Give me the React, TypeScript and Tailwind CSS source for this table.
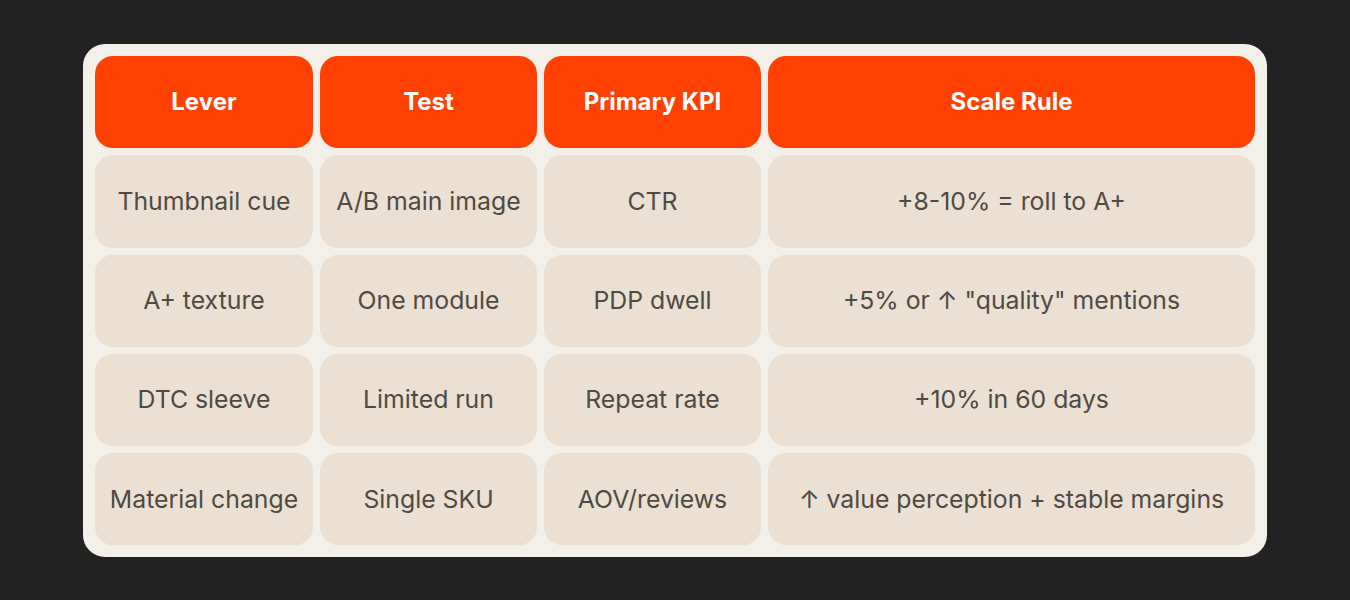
import React from 'react';

const headers = ['Lever', 'Test', 'Primary KPI', 'Scale Rule'];

const rows: string[][] = [
  ['Thumbnail cue', 'A/B main image', 'CTR', '+8-10% = roll to A+'],
  ['A+ texture', 'One module', 'PDP dwell', '+5% or ↑ "quality" mentions'],
  ['DTC sleeve', 'Limited run', 'Repeat rate', '+10% in 60 days'],
  ['Material change', 'Single SKU', 'AOV/reviews', '↑ value perception + stable margins'],
];

export default function App() {
  return (
    <div className="w-[1350px] h-[600px] bg-[#222222] flex items-start justify-center pt-[44px] font-['Inter','Noto_Sans',sans-serif]">
      <div className="w-[1184px] rounded-[22px] bg-[#f3f0ea] p-[12px]">
        <div className="grid grid-cols-[218px_217px_217px_487px] auto-rows-[92.25px] gap-[7px]">
          {headers.map((h) => (
            <div
              key={h}
              className="rounded-[18px] bg-[#fe4103] flex items-center justify-center text-white text-[24px] font-bold"
            >
              {h}
            </div>
          ))}
          {rows.map((row) =>
            row.map((cell, i) => (
              <div
                key={row[0] + i}
                className="rounded-[18px] bg-[#ebe0d2] flex items-center justify-center text-[#4f4a44] text-[24.8px]"
              >
                {cell}
              </div>
            ))
          )}
        </div>
      </div>
    </div>
  );
}
